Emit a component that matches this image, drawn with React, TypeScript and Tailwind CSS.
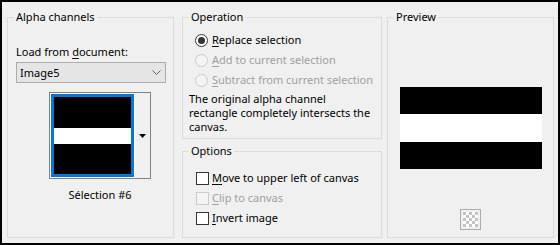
import React from 'react';

function Radio({ label, hot, checked, disabled }: { label: string; hot: string; checked?: boolean; disabled?: boolean }) {
  const rest = label.slice(hot.length);
  return (
    <div className="flex h-[20px] items-center">
      <div
        className={`flex h-[13px] w-[13px] items-center justify-center rounded-full border ${
          disabled ? 'border-[#cccccc] bg-[#f4f4f4]' : 'border-[#333333] bg-white'
        }`}
      >
        {checked && <div className="h-[7px] w-[7px] rounded-full bg-[#333333]" />}
      </div>
      <span className={`ml-[4px] whitespace-nowrap ${disabled ? 'text-[#a0a0a0]' : 'text-black'}`}>
        <span className="underline underline-offset-2">{hot}</span>
        {rest}
      </span>
    </div>
  );
}

function Check({ label, hot, disabled }: { label: string; hot: string; disabled?: boolean }) {
  const rest = label.slice(hot.length);
  return (
    <div className="flex h-[20px] items-center">
      <div
        className={`h-[13px] w-[13px] border ${
          disabled ? 'border-[#cccccc] bg-[#f4f4f4]' : 'border-[#333333] bg-white'
        }`}
      />
      <span className={`ml-[3px] whitespace-nowrap ${disabled ? 'text-[#a0a0a0]' : 'text-black'}`}>
        <span className="underline underline-offset-2">{hot}</span>
        {rest}
      </span>
    </div>
  );
}

function Checker() {
  const cells = [];
  for (let r = 0; r < 5; r++) {
    for (let c = 0; c < 5; c++) {
      if ((r + c) % 2 === 0) cells.push(<rect key={`${r}-${c}`} x={3 + c * 3} y={3 + r * 3} width="3" height="3" fill="#c4c4c4" />);
    }
  }
  return (
    <svg width="21" height="21" viewBox="0 0 21 21">
      <rect x="0.5" y="0.5" width="20" height="20" fill="#f0f0f0" stroke="#adadad" />
      <rect x="3" y="3" width="15" height="15" fill="#ffffff" />
      {cells}
    </svg>
  );
}

export default function App() {
  return (
    <div className="flex h-[245px] w-[560px] border-2 border-black bg-[#f0f0f0] pl-[5px] pt-[7px] font-['Noto_Sans',sans-serif] text-[11px] leading-[16px] text-black">
      {/* Alpha channels */}
      <fieldset className="h-[229px] w-[167px] border border-[#dcdcdc]">
        <legend className="ml-[6px] px-[2px]">Alpha channels</legend>
        <div className="pl-[8px]">
          <div className="mt-[19px]">
            Load from <span className="underline underline-offset-2">d</span>ocument:
          </div>
          <div className="mt-[2px] flex h-[21px] w-[150px] items-center justify-between border border-[#adadad] bg-[#e5e5e5] pl-[3px] pr-[4px]">
            <span>Image5</span>
            <svg width="9" height="5" viewBox="0 0 9 5">
              <polyline points="0.5,0.5 4.5,4.5 8.5,0.5" fill="none" stroke="#606060" strokeWidth="1" />
            </svg>
          </div>
          <div className="ml-[33px] mt-[9px] flex h-[87px] w-[102px] border border-[#828282] bg-white">
            <div className="p-[1px]">
              <div className="flex h-[83px] w-[83px] flex-col justify-center border-[3px] border-[#0078d7] bg-black">
                <div className="h-[16px] bg-white" />
              </div>
            </div>
            <div className="flex flex-1 items-center justify-center bg-[#f0f0f0]">
              <svg width="7" height="4" viewBox="0 0 7 4">
                <polygon points="0,0 7,0 3.5,4" fill="#000000" />
              </svg>
            </div>
          </div>
          <div className="ml-[33px] mt-[8px] w-[102px] text-center">Sélection #6</div>
        </div>
      </fieldset>

      {/* Middle */}
      <div className="ml-[8px] flex w-[200px] flex-col">
        <fieldset className="h-[130px] border border-[#dcdcdc]">
          <legend className="ml-[6px] px-[2px]">Operation</legend>
          <div className="mt-[5px] pl-[12px]">
            <Radio label="Replace selection" hot="R" checked />
            <Radio label="Add to current selection" hot="A" disabled />
            <Radio label="Subtract from current selection" hot="S" disabled />
          </div>
          <div className="mt-[2px] whitespace-nowrap pl-[6px] leading-[14px]">
            The original alpha channel
            <br />
            rectangle completely intersects the
            <br />
            canvas.
          </div>
        </fieldset>
        <fieldset className="mt-[4px] h-[95px] border border-[#dcdcdc]">
          <legend className="ml-[6px] px-[2px]">Options</legend>
          <div className="mt-[9px] pl-[13px]">
            <Check label="Move to upper left of canvas" hot="M" />
            <Check label="Clip to canvas" hot="C" disabled />
            <Check label="Invert image" hot="I" />
          </div>
        </fieldset>
      </div>

      {/* Preview */}
      <fieldset className="ml-[5px] h-[229px] w-[167px] border border-[#dcdcdc]">
        <legend className="ml-[6px] px-[2px]">Preview</legend>
        <div className="flex flex-col items-center">
          <div className="mt-[62px] flex h-[82px] w-[142px] flex-col justify-center bg-black">
            <div className="h-[28px] bg-white" />
          </div>
          <div className="mt-[40px] flex">
            <Checker />
          </div>
        </div>
      </fieldset>
    </div>
  );
}
